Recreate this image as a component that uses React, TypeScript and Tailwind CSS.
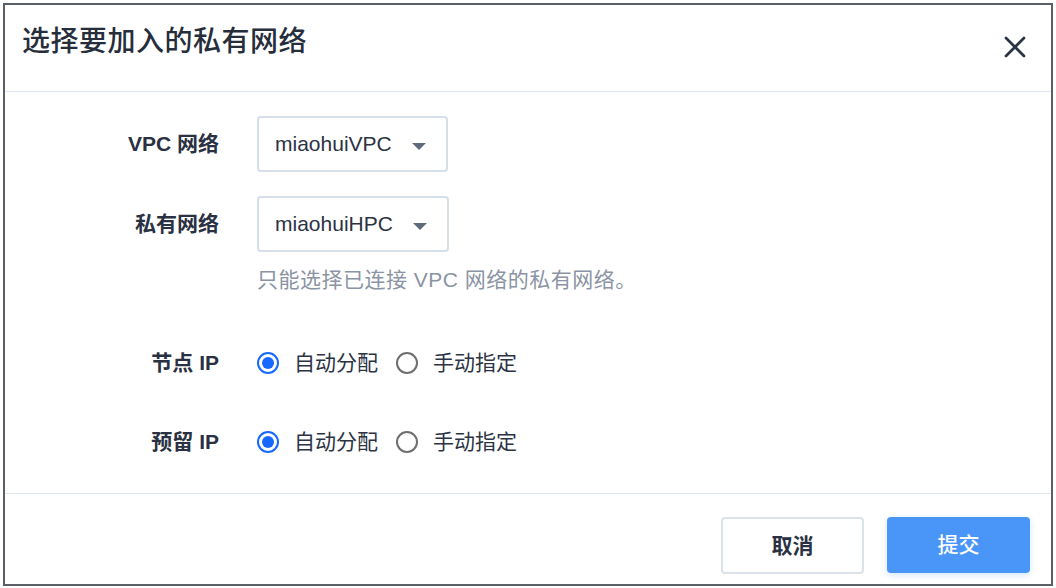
import { X } from "lucide-react";

const FONT = { fontFamily: '"Liberation Sans", "Noto Sans CJK SC", sans-serif' };

function Select({ value }: { value: string }) {
	return (
		<div className="inline-flex h-[56px] items-center gap-[20px] rounded-[4px] border-2 border-[#d6dee8] bg-white pl-[16px] pr-[20px] text-[21px] text-[#2b3344]">
			<span>{value}</span>
			<svg width="14" height="7" viewBox="0 0 14 7" className="mt-[4px]">
				<path d="M0 0 L14 0 L7 7 Z" fill="#5f6a7c" />
			</svg>
		</div>
	);
}

function Radio({ checked, label }: { checked?: boolean; label: string }) {
	return (
		<label className="flex items-center gap-[15px]">
			{checked ? (
				<span className="flex h-[22px] w-[22px] items-center justify-center rounded-full border-2 border-[#1668ff]">
					<span className="h-[12px] w-[12px] rounded-full bg-[#1668ff]" />
				</span>
			) : (
				<span className="h-[22px] w-[22px] rounded-full border-2 border-[#6e6e6e]" />
			)}
			<span>{label}</span>
		</label>
	);
}

function Row({ label, children }: { label: string; children: React.ReactNode }) {
	return (
		<div className="flex items-center">
			<div className="w-[214px] shrink-0 text-right text-[21px] font-bold text-[#2a3142]">{label}</div>
			<div className="ml-[38px]">{children}</div>
		</div>
	);
}

export default function App() {
	return (
		<div className="h-[588px] w-[1056px] bg-white p-[3px]" style={FONT}>
			<div className="flex h-[583px] flex-col border-2 border-[#5b5f67] bg-white">
				<header className="flex h-[87px] shrink-0 items-start justify-between border-b border-[#dde5ee] pl-[17px] pr-[18px]">
					<h1 className="mt-[17px] text-[28px] font-medium leading-[40px] tracking-[0.5px] text-[#262d3b]">选择要加入的私有网络</h1>
					<button className="mt-[24px] text-[#2b3445]">
						<X size={36} strokeWidth={1.8} />
					</button>
				</header>

				<main className="flex flex-1 flex-col pt-[24px] text-[21px] text-[#2b3344]">
					<Row label="VPC 网络">
						<Select value="miaohuiVPC" />
					</Row>
					<div className="mt-[24px]">
						<Row label="私有网络">
							<Select value="miaohuiHPC" />
						</Row>
					</div>
					<p className="ml-[252px] mt-[13px] text-[21px] leading-[30px] tracking-[0.5px] text-[#8b94a4]">只能选择已连接 VPC 网络的私有网络。</p>
					<div className="mt-[40px] flex h-[56px] items-center">
						<Row label="节点 IP">
							<div className="flex items-center gap-[18px]">
								<Radio checked label="自动分配" />
								<Radio label="手动指定" />
							</div>
						</Row>
					</div>
					<div className="mt-[23px] flex h-[56px] items-center">
						<Row label="预留 IP">
							<div className="flex items-center gap-[18px]">
								<Radio checked label="自动分配" />
								<Radio label="手动指定" />
							</div>
						</Row>
					</div>
				</main>

				<footer className="flex h-[91px] shrink-0 items-start justify-end gap-[23px] border-t border-[#dde5ee] pr-[21px] pt-[23px]">
					<button className="h-[57px] w-[143px] rounded-[4px] border-2 border-[#dbe2ea] bg-white text-[21px] font-bold text-[#2a3142]">取消</button>
					<button className="h-[56px] w-[143px] rounded-[4px] bg-[#4a95f8] text-[21px] font-medium text-white shadow-[0_2px_6px_rgba(74,149,248,0.25)]">提交</button>
				</footer>
			</div>
		</div>
	);
}
